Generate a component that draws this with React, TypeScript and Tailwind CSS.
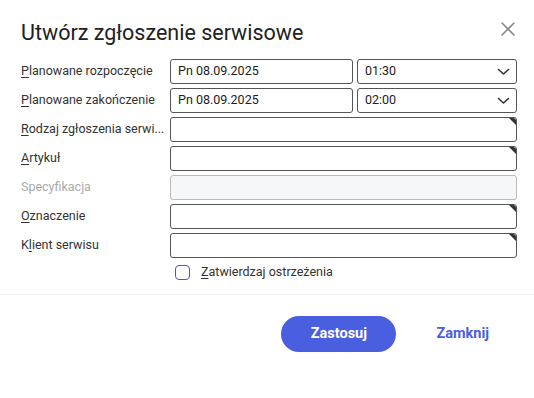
import { useState } from 'react';

type Field = {
  label: string;
  key: string;
  rest: string;
  disabled?: boolean;
};

const fields: Field[] = [
  { label: 'Rodzaj zgłoszenia serwi...', key: 'R', rest: 'odzaj zgłoszenia serwi...' },
  { label: 'Artykuł', key: 'A', rest: 'rtykuł' },
  { label: 'Specyfikacja', key: '', rest: 'Specyfikacja', disabled: true },
  { label: 'Oznaczenie', key: 'O', rest: 'znaczenie' },
  { label: 'Klient serwisu', key: '', rest: '' },
];

function Chevron() {
  return (
    <svg width="13" height="8" viewBox="0 0 13 8" fill="none">
      <path d="M1.5 1.5 L6.5 6 L11.5 1.5" stroke="#333" strokeWidth="1.6" strokeLinecap="round" strokeLinejoin="round" />
    </svg>
  );
}

function Corner() {
  return <span className="absolute right-0 top-0 w-0 h-0 border-t-[7px] border-l-[7px] border-t-[#333] border-l-transparent rounded-tr-[3px]" />;
}

function DateRow({ label, keyChar, rest, date, time }: { label: string; keyChar: string; rest: string; date: string; time: string }) {
  return (
    <div className="flex items-center h-[25px]">
      <div className="w-[149px] text-[12.5px] text-[#333]" aria-label={label}>
        <span className="underline underline-offset-2">{keyChar}</span>
        {rest}
      </div>
      <div className="flex-1 flex gap-[4px]">
        <div className="w-[183px] h-[25px] border border-[#555] rounded-[3px] px-[7px] flex items-center text-[12.5px] text-[#222]">{date}</div>
        <div className="flex-1 h-[25px] border border-[#555] rounded-[3px] pl-[7px] pr-[6px] flex items-center justify-between text-[12.5px] text-[#222]">
          <span>{time}</span>
          <Chevron />
        </div>
      </div>
    </div>
  );
}

export default function App() {
  const [checked, setChecked] = useState(false);

  return (
    <div className="w-[534px] h-[398px] bg-white font-['Roboto',sans-serif] overflow-hidden">
      <div className="flex items-start justify-between pl-[21px] pr-[18px] pt-[20px]">
        <h1 className="text-[21.5px] leading-[26px] text-[#222]">Utwórz zgłoszenie serwisowe</h1>
        <button className="mt-[1px] text-[#8a8a8a]" aria-label="Zamknij">
          <svg width="16" height="16" viewBox="0 0 16 16" fill="none">
            <path d="M2 2 L14 14 M14 2 L2 14" stroke="currentColor" strokeWidth="1.6" strokeLinecap="round" />
          </svg>
        </button>
      </div>

      <div className="pl-[21px] pr-[17px] pt-[13px] flex flex-col gap-[4px]">
        <DateRow label="Planowane rozpoczęcie" keyChar="P" rest="lanowane rozpoczęcie" date="Pn 08.09.2025" time="01:30" />
        <DateRow label="Planowane zakończenie" keyChar="P" rest="lanowane zakończenie" date="Pn 08.09.2025" time="02:00" />
        {fields.map((f) => (
          <div key={f.label} className="flex items-center h-[25px]">
            <div className={`w-[149px] text-[12.5px] whitespace-nowrap ${f.disabled ? 'text-[#aaa]' : 'text-[#333]'}`}>
              {f.label === 'Klient serwisu' ? (
                <>
                  K<span className="underline underline-offset-2">l</span>ient serwisu
                </>
              ) : f.disabled ? (
                f.rest
              ) : (
                <>
                  <span className="underline underline-offset-2">{f.key}</span>
                  {f.rest}
                </>
              )}
            </div>
            {f.disabled ? (
              <div className="flex-1 h-[25px] border border-[#bbb] bg-[#f6f7f9] rounded-[3px]" />
            ) : (
              <div className="relative flex-1 h-[25px] border border-[#555] rounded-[3px] overflow-hidden">
                <Corner />
              </div>
            )}
          </div>
        ))}
      </div>

      <label className="flex items-center gap-[11px] pl-[175px] mt-[6px] h-[16px] text-[12.5px] text-[#333] cursor-pointer">
        <input type="checkbox" checked={checked} onChange={() => setChecked(!checked)} className="sr-only" />
        <span className="w-[15px] h-[15px] border-[1.5px] border-[#4a55c8] rounded-[4px] bg-white" />
        <span>
          <span className="underline underline-offset-2">Z</span>atwierdzaj ostrzeżenia
        </span>
      </label>

      <div className="mt-[14px] border-t border-[#eee]" />

      <div className="flex items-center justify-end pr-[45px] pt-[21px] gap-[40px]">
        <button className="w-[115px] h-[36px] rounded-full bg-[#4a5ee0] text-white text-[14.5px] font-bold">Zastosuj</button>
        <button className="text-[#4a5ee0] text-[14.5px] font-bold">Zamknij</button>
      </div>
    </div>
  );
}
